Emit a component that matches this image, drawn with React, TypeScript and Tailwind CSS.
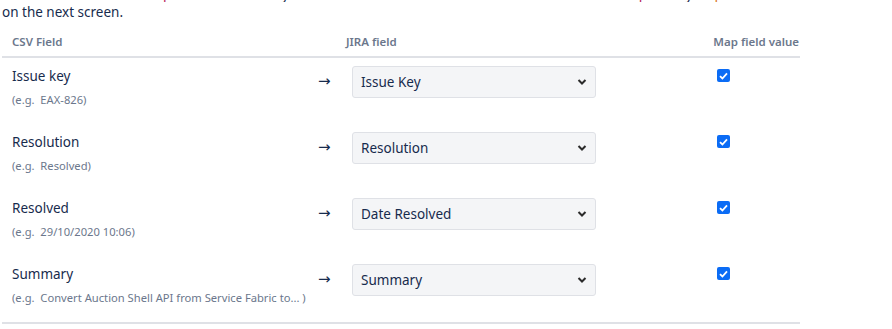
import React from "react";

const rows = [
  { label: "Issue key", example: "(e.g.  EAX-826)", value: "Issue Key" },
  { label: "Resolution", example: "(e.g.  Resolved)", value: "Resolution" },
  { label: "Resolved", example: "(e.g.  29/10/2020 10:06)", value: "Date Resolved" },
  {
    label: "Summary",
    example: "(e.g.  Convert Auction Shell API from Service Fabric to... )",
    value: "Summary",
  },
];

function Chevron() {
  return (
    <svg width="10" height="8" viewBox="0 0 10 8" className="text-[#2b2b2b]">
      <path d="M1.5 2 L5 5.5 L8.5 2" fill="none" stroke="currentColor" strokeWidth="2" />
    </svg>
  );
}

function Check() {
  return (
    <div className="w-[13px] h-[13px] rounded-[2px] bg-[#0b6cf5] flex items-center justify-center">
      <svg width="9" height="8" viewBox="0 0 9 8">
        <path d="M1 4.2 L3.4 6.5 L8 1.3" fill="none" stroke="white" strokeWidth="1.8" />
      </svg>
    </div>
  );
}

export default function App() {
  return (
    <div
      className="w-[892px] h-[329px] bg-white overflow-hidden text-[#172b4d]"
      style={{ fontFamily: '"Noto Sans", "Open Sans", sans-serif' }}
    >
      <div className="h-[2px] overflow-hidden">
        <div className="flex whitespace-nowrap text-[14px] leading-[20px] -mt-[16px]">
          <span className="w-[163px]" />
          <span className="text-[#b8235a]">p</span>
          <span className="w-[110px]" />
          <span>y</span>
          <span className="w-[350px]" />
          <span className="text-[#b8235a]">p</span>
          <span className="w-[38px]" />
          <span>y</span>
          <span className="w-[22px]" />
          <span className="text-[#d9731c]">p</span>
        </div>
      </div>
      <div className="pl-[2px] text-[13.5px] leading-[20px]">on the next screen.</div>

      <div className="w-[798px] ml-[2px] mt-[6px]">
        <div className="flex items-end h-[30px] pb-[6px] text-[11.5px] font-semibold text-[#6b778c] border-b-2 border-[#dfe1e6]">
          <div className="w-[344px] pl-[10px]">CSV Field</div>
          <div className="w-[360px]">JIRA field</div>
          <div className="flex-1 text-right pr-[1px]">Map field value</div>
        </div>
        {rows.map((r) => (
          <div key={r.label} className="flex h-[66px]">
            <div className="w-[310px] pl-[10px] pt-[8px]">
              <div className="text-[13.5px] leading-[20px]">{r.label}</div>
              <div className="text-[11.2px] leading-[16px] mt-[6px] text-[#6b778c] whitespace-pre">{r.example}</div>
            </div>
            <div
              className="w-[40px] pt-[13px] pl-[6px] text-[15px] leading-[20px]"
              style={{ fontFamily: '"DejaVu Sans", sans-serif' }}
            >
              →
            </div>
            <div className="w-[364px] pt-[8px]">
              <div className="w-[244px] h-[32px] rounded-[3px] border border-[#dfe1e6] bg-[#f4f5f7] flex items-center justify-between pl-[8px] pr-[8px] text-[13.5px]">
                <span>{r.value}</span>
                <Chevron />
              </div>
            </div>
            <div className="pt-[11px] pl-[1px]">
              <Check />
            </div>
          </div>
        ))}
        <div className="border-b-2 border-[#dfe1e6]" />
      </div>
    </div>
  );
}
